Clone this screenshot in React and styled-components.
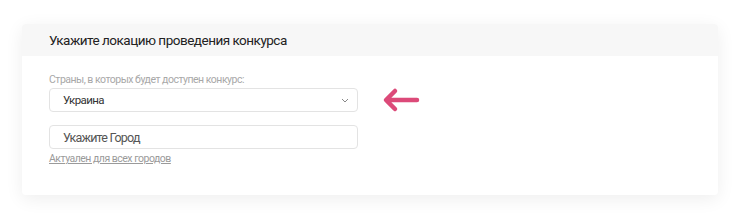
import React from "react";
import styled, { createGlobalStyle } from "styled-components";

const GlobalStyle = createGlobalStyle`
  body {
    margin: 0;
    background: #fff;
    font-family: Roboto, "Liberation Sans", sans-serif;
  }
`;

const Page = styled.div`
  padding: 24px 23px 27px 22px;
`;

const Card = styled.div`
  background: #fff;
  border-radius: 4px;
  box-shadow: 0 4px 18px rgba(0, 0, 0, 0.07);
  height: 171px;
  overflow: hidden;
`;

const Header = styled.div`
  height: 32px;
  background: #f7f7f7;
  display: flex;
  align-items: center;
  padding-left: 27px;
  font-size: 13.5px;
  letter-spacing: -0.5px;
  color: #222;
`;

const Body = styled.div`
  padding: 17px 27px 0;
  display: flex;
  flex-direction: column;
`;

const Label = styled.div`
  font-size: 10.5px;
  letter-spacing: -0.5px;
  color: #a8a8a8;
  line-height: 13px;
  margin-bottom: 1px;
`;

const Row = styled.div`
  display: flex;
  align-items: center;
  gap: 24px;
`;

const Field = styled.div`
  width: 309px;
  height: 24px;
  box-sizing: border-box;
  border: 1px solid #e3e3e3;
  border-radius: 4px;
  display: flex;
  align-items: center;
  padding: 0 8px 0 13px;
  font-size: ${p => (p.$big ? "12.5px" : "11.5px")};
  letter-spacing: ${p => (p.$big ? "-0.8px" : "-0.6px")};
  color: ${p => (p.$big ? "#555" : "#333")};
  margin-top: ${p => p.$gap || 0}px;
`;

const Chevron = styled.svg`
  margin-left: auto;
`;

const Link = styled.a`
  font-size: 10.5px;
  letter-spacing: -0.5px;
  line-height: 13px;
  color: #9a9a9a;
  text-decoration: underline;
  margin-top: 3px;
  width: fit-content;
`;

export default function App() {
  return (
    <>
      <GlobalStyle />
      <Page>
        <Card>
          <Header>Укажите локацию проведения конкурса</Header>
          <Body>
            <Label>Страны, в которых будет доступен конкурс:</Label>
            <Row>
              <Field>
                Украина
                <Chevron width="8" height="5" viewBox="0 0 8 5">
                  <path d="M1 1l3 3 3-3" fill="none" stroke="#888" strokeWidth="1" />
                </Chevron>
              </Field>
              <svg width="38" height="26" viewBox="0 0 38 26">
                <path
                  d="M35 13H5M13 4L4 13l9 9"
                  fill="none"
                  stroke="#dc4a79"
                  strokeWidth="4.5"
                  strokeLinecap="round"
                  strokeLinejoin="round"
                />
              </svg>
            </Row>
            <Field $big $gap={12}>Укажите Город</Field>
            <Link>Актуален для всех городов</Link>
          </Body>
        </Card>
      </Page>
    </>
  );
}
